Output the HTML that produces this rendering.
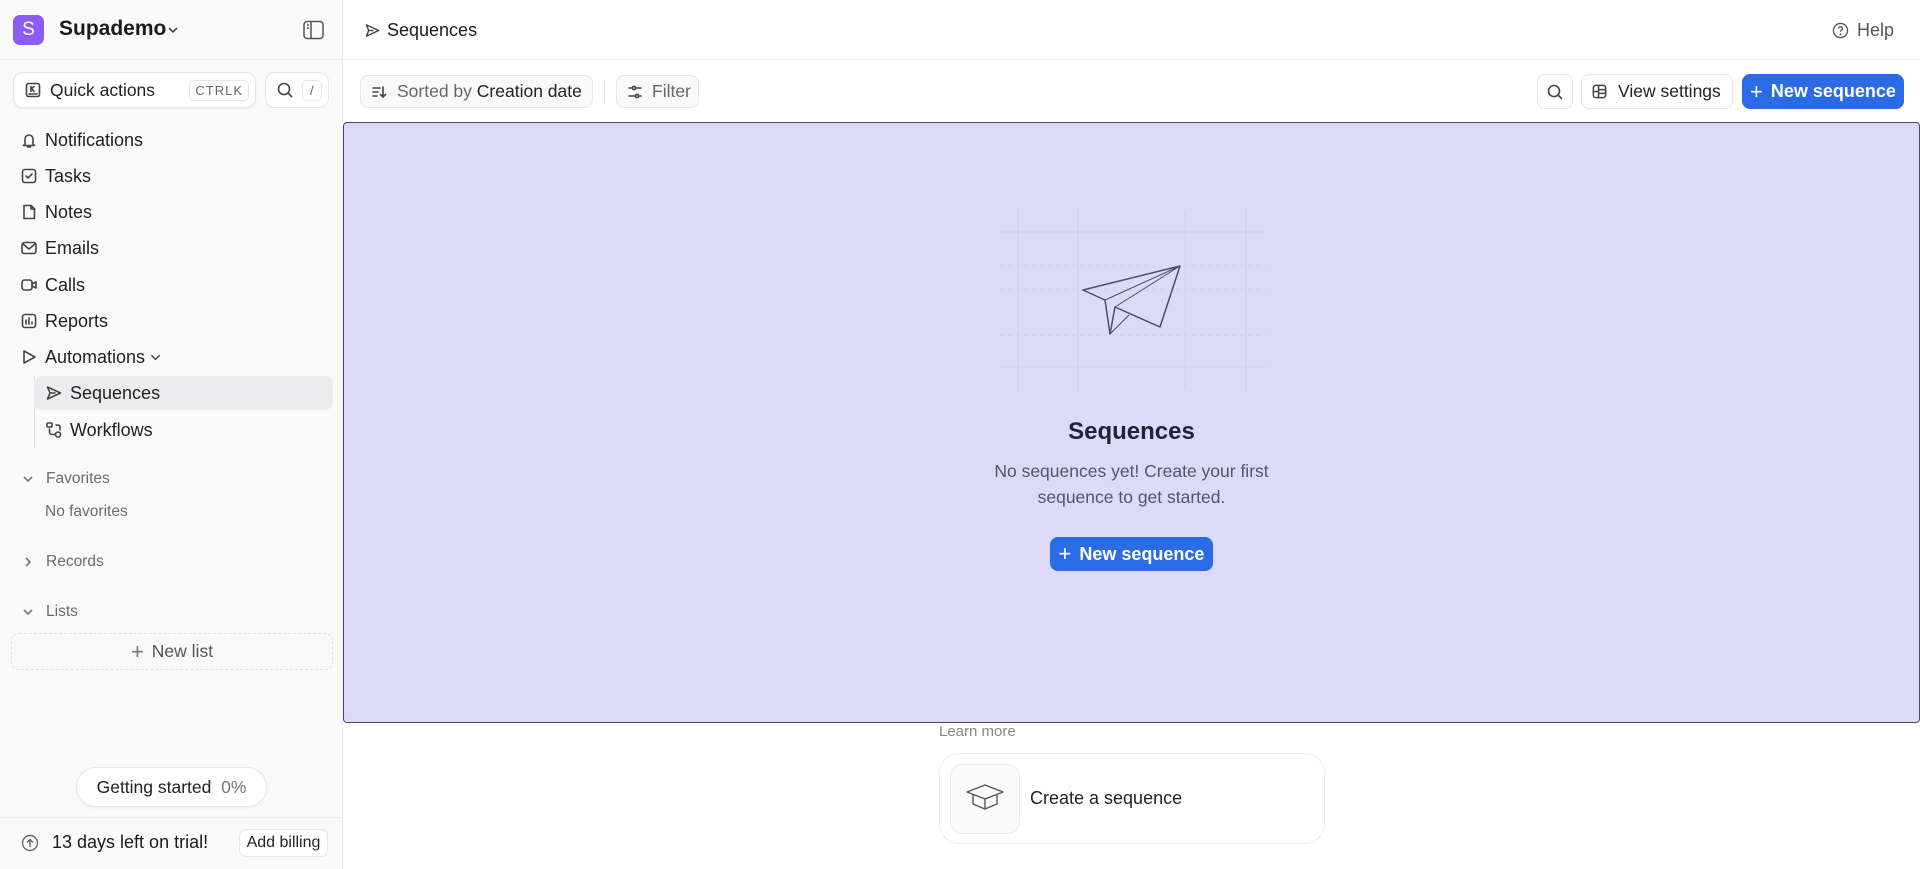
<!DOCTYPE html>
<html><head><meta charset="utf-8"><style>
*{box-sizing:border-box;margin:0;padding:0}
body{width:1920px;height:869px;overflow:hidden;font-family:"Liberation Sans",sans-serif;background:#fff;color:#1f1f24;position:relative}
.abs{position:absolute}
#side{position:absolute;left:0;top:0;width:343px;height:869px;background:#fafafa;border-right:1px solid #ececee}
.item{position:absolute;left:20px;font-size:18px;color:#222;display:flex;align-items:center;gap:7px;height:24px}
.item svg{width:18px;height:18px;stroke:#444;fill:none;stroke-width:1.6;stroke-linecap:round;stroke-linejoin:round}
.sec{position:absolute;left:22px;font-size:15.5px;color:#6b6b73;display:flex;align-items:center;gap:12px}
.sec svg{width:12px;height:12px;stroke:#777;fill:none;stroke-width:1.6}
.btn{position:absolute;border:1px solid #e6e6ea;border-radius:8px;background:#fff;display:flex;align-items:center;font-size:17.5px;color:#222}
.btn svg{stroke:#444;fill:none;stroke-width:1.6;stroke-linecap:round;stroke-linejoin:round}
</style></head><body>
<div id="side">
  <div class="abs" style="left:13px;top:15px;width:31px;height:30px;border-radius:7px;background:#8b5cf6;color:#fff;font-size:19px;display:flex;align-items:center;justify-content:center">S</div>
  <div class="abs" style="left:59px;top:17px;font-size:21px;font-weight:bold;color:#1a1a1f">Supademo</div>
  <svg class="abs" style="left:167px;top:24px" width="12" height="12" viewBox="0 0 12 12" fill="none" stroke="#333" stroke-width="1.5"><path d="M2 4l4 4 4-4"/></svg>
  <svg class="abs" style="left:303px;top:20px" width="21" height="20" viewBox="0 0 21 20" fill="none" stroke="#555" stroke-width="1.5"><rect x="1" y="1.5" width="19" height="17" rx="3"/><path d="M8 2v16M4 5h2M4 8h2"/></svg>
  <div class="abs" style="left:0;top:59px;width:343px;border-top:1px solid #eee"></div>
  <div class="btn" style="left:13px;top:72px;width:243px;height:36px;border-radius:10px;box-shadow:0 1px 2px rgba(0,0,0,.05)">
    <svg style="margin-left:11px" width="16" height="16" viewBox="0 0 16 16"><rect x="1.5" y="1.5" width="13" height="13" rx="2"/><path d="M6 4.5v5M6 7l3-2.5M6.8 6.5L9 9.5M4 12h8"/></svg>
    <span style="margin-left:9px">Quick actions</span>
    <span style="margin-left:auto;margin-right:6px;border:1px solid #e6e6ea;border-radius:5px;font-size:13px;color:#666;padding:2px 5px;letter-spacing:1px">CTRLK</span>
  </div>
  <div class="btn" style="left:265px;top:72px;width:64px;height:36px;border-radius:10px">
    <svg style="margin-left:10px" width="18" height="18" viewBox="0 0 18 18"><circle cx="8" cy="8" r="5.5"/><path d="M12 12l3.5 3.5"/></svg>
    <span style="margin-left:8px;border:1px solid #e6e6ea;border-radius:5px;font-size:13px;color:#666;padding:2px 7px">/</span>
  </div>
  <div class="item" style="top:128px"><svg viewBox="0 0 18 18"><path d="M5 13V8a4 4 0 018 0v5l1.5 1.5h-11zM7.5 16h3"/></svg>Notifications</div>
  <div class="item" style="top:164px"><svg viewBox="0 0 18 18"><rect x="2.5" y="2.5" width="13" height="13" rx="2.5"/><path d="M6 9l2 2 4-4"/></svg>Tasks</div>
  <div class="item" style="top:200px"><svg viewBox="0 0 18 18"><path d="M4 2.5h7l3.5 3.5v9.5H4z"/><path d="M11 2.5V6h3.5"/></svg>Notes</div>
  <div class="item" style="top:236px"><svg viewBox="0 0 18 18"><rect x="2" y="3.5" width="14" height="11" rx="2.5"/><path d="M3 5l6 5 6-5"/></svg>Emails</div>
  <div class="item" style="top:273px"><svg viewBox="0 0 18 18"><rect x="2" y="4" width="10" height="10" rx="2.5"/><path d="M12 8l4-2v6l-4-2"/></svg>Calls</div>
  <div class="item" style="top:309px"><svg viewBox="0 0 18 18"><rect x="2.5" y="2.5" width="13" height="13" rx="2.5"/><path d="M6 12V8M9 12V6M12 12v-2"/></svg>Reports</div>
  <div class="item" style="top:345px"><svg viewBox="0 0 18 18"><path d="M4 3l11 6-11 6z"/></svg>Automations<svg style="width:11px;height:11px;margin-left:-2px" viewBox="0 0 12 12"><path d="M2 4l4 4 4-4"/></svg></div>
  <div class="abs" style="left:34px;top:376px;width:1px;height:72px;background:#e2e2e6"></div>
  <div class="abs" style="left:34px;top:376px;width:299px;height:34px;border-radius:8px;background:#ececef"></div>
  <div class="item" style="left:45px;top:381px"><svg viewBox="0 0 18 18"><path d="M2.5 3l13 6-13 6 2.5-6z"/><path d="M5 9h5"/></svg>Sequences</div>
  <div class="item" style="left:45px;top:418px"><svg viewBox="0 0 18 18"><rect x="2" y="2" width="5" height="4" rx="1"/><circle cx="13" cy="13.5" r="2.5"/><path d="M4.5 8v3a2.5 2.5 0 002.5 2.5h3M11 4h2a2 2 0 012 2v3"/></svg>Workflows</div>
  <div class="sec" style="top:470px"><svg viewBox="0 0 12 12"><path d="M2 4l4 4 4-4"/></svg>Favorites</div>
  <div class="abs" style="left:45px;top:503px;font-size:15.5px;color:#6b6b73">No favorites</div>
  <div class="sec" style="top:553px"><svg viewBox="0 0 12 12"><path d="M4 2l4 4-4 4"/></svg>Records</div>
  <div class="sec" style="top:603px"><svg viewBox="0 0 12 12"><path d="M2 4l4 4 4-4"/></svg>Lists</div>
  <div class="abs" style="left:11px;top:633px;width:322px;height:37px;border:1px dashed #e2e2e6;border-radius:8px;display:flex;align-items:center;justify-content:center;font-size:17.5px;color:#555;gap:8px"><span style="font-size:22px;font-weight:300;color:#777">+</span>New list</div>
  <div class="abs" style="left:76px;top:767px;width:191px;height:40px;border:1px solid #e8e8ec;border-radius:20px;background:#fff;display:flex;align-items:center;justify-content:center;font-size:17.5px;color:#222;box-shadow:0 1px 3px rgba(0,0,0,.05)">Getting started&nbsp;&nbsp;<span style="color:#777">0%</span></div>
  <div class="abs" style="left:0;top:817px;width:343px;border-top:1px solid #eee"></div>
  <svg class="abs" style="left:20px;top:833px" width="20" height="20" viewBox="0 0 20 20" fill="none" stroke="#666" stroke-width="1.4"><circle cx="10" cy="10" r="7.5"/><path d="M10 14V6.5M7 9.5l3-3 3 3"/></svg>
  <div class="abs" style="left:52px;top:832px;font-size:18px;color:#1a1a1f">13 days left on trial!</div>
  <div class="btn" style="left:239px;top:829px;width:89px;height:28px;font-size:16px;justify-content:center;border-radius:7px">Add billing</div>
</div>

<svg class="abs" style="left:364px;top:22px" width="17" height="17" viewBox="0 0 18 18" fill="none" stroke="#444" stroke-width="1.5" stroke-linejoin="round"><path d="M2.5 3l13 6-13 6 2.5-6z"/><path d="M5 9h5"/></svg>
<div class="abs" style="left:387px;top:20px;font-size:18px;color:#1a1a1f">Sequences</div>
<svg class="abs" style="left:1832px;top:22px" width="17" height="17" viewBox="0 0 18 18" fill="none" stroke="#555" stroke-width="1.4"><circle cx="9" cy="9" r="7.5"/><path d="M7 7a2 2 0 113 1.7c-.7.4-1 .8-1 1.6"/><circle cx="9" cy="13" r=".4" fill="#555"/></svg>
<div class="abs" style="left:1857px;top:20px;font-size:18px;color:#555">Help</div>
<div class="abs" style="left:343px;top:59px;width:1577px;border-top:1px solid #eee"></div>

<div class="btn" style="left:360px;top:75px;width:233px;height:33px;background:#fafafa">
  <svg style="margin-left:10px" width="16" height="16" viewBox="0 0 16 16"><path d="M2 4h7M2 8h5M2 12h4M12 3v10M9.5 10.5L12 13l2.5-2.5"/></svg>
  <span style="margin-left:10px;color:#666">Sorted by&nbsp;</span><span>Creation date</span>
</div>
<div class="abs" style="left:604px;top:80px;width:1px;height:22px;background:#e8e8ec"></div>
<div class="btn" style="left:616px;top:75px;width:83px;height:33px;background:#fafafa">
  <svg style="margin-left:10px" width="16" height="16" viewBox="0 0 16 16"><path d="M2 4h3M9 4h5M2 12h6M12 12h2"/><circle cx="7" cy="4" r="1.6"/><circle cx="10" cy="12" r="1.6"/></svg>
  <span style="margin-left:9px;color:#666">Filter</span>
</div>
<div class="btn" style="left:1537px;top:74px;width:36px;height:35px;justify-content:center">
  <svg width="18" height="18" viewBox="0 0 18 18"><circle cx="8" cy="8" r="5.5"/><path d="M12 12l3.5 3.5"/></svg>
</div>
<div class="btn" style="left:1581px;top:74px;width:152px;height:35px">
  <svg style="margin-left:9px" width="17" height="17" viewBox="0 0 18 18"><rect x="2.5" y="2.5" width="13" height="13" rx="2.5"/><path d="M8 2.5v13M8 7h7.5M8 11h7.5M2.5 9H8"/></svg>
  <span style="margin-left:10px">View settings</span>
</div>
<div class="abs" style="left:1742px;top:74px;width:162px;height:35px;border-radius:8px;background:#2b6be6;color:#fff;font-size:18px;font-weight:bold;display:flex;align-items:center;justify-content:center;gap:8px"><span style="font-weight:300;font-size:22px">+</span>New sequence</div>

<div class="abs" style="left:343px;top:122px;width:1577px;height:601px;background:#dcdaf8;border:1.5px solid #4b4a66;border-radius:4px"></div>
<svg class="abs" style="left:990px;top:200px" width="290" height="200" viewBox="990 200 290 200" fill="none">
  <g stroke="#cfcdf0" stroke-width="1">
    <path d="M1018 210v180M1078 210v180M1185 210v180M1246 210v180"/>
    <path d="M1000 232h265M1000 367h265"/>
    <path d="M1000 266h265M1000 290h265M1000 335h265" stroke-dasharray="4 4"/>
  </g>
  <g stroke="#4e4d68" stroke-width="1.5" stroke-linejoin="round">
    <path d="M1083 290L1180 266L1160 327L1115 307L1110 334L1105 300Z"/>
    <path d="M1105 300L1180 266M1115 307L1180 266M1110 334L1129 315" stroke-width="1"/>
  </g>
</svg>
<div class="abs" style="left:343px;top:418px;width:1577px;text-align:center;font-size:24px;font-weight:bold;color:#23223a">Sequences</div>
<div class="abs" style="left:343px;top:458px;width:1577px;text-align:center;font-size:17.5px;line-height:26px;color:#55546c">No sequences yet! Create your first<br>sequence to get started.</div>
<div class="abs" style="left:1050px;top:537px;width:163px;height:34px;border-radius:8px;background:#2b6be6;color:#fff;font-size:18px;font-weight:bold;display:flex;align-items:center;justify-content:center;gap:8px"><span style="font-weight:300;font-size:22px">+</span>New sequence</div>

<div class="abs" style="left:939px;top:723px;font-size:15px;color:#888">Learn more</div>
<div class="abs" style="left:939px;top:753px;width:386px;height:91px;border:1px solid #ececef;border-radius:20px;background:#fff"></div>
<div class="abs" style="left:950px;top:764px;width:70px;height:70px;border:1px solid #ececef;border-radius:12px;background:#fafafa"></div>
<svg class="abs" style="left:964px;top:780px" width="42" height="36" viewBox="0 0 42 36" fill="none" stroke="#555" stroke-width="1.4" stroke-linejoin="round"><path d="M3 12L21 5l18 7-18 7z"/><path d="M9 15v9l12 5 12-5v-9"/><path d="M21 19v10"/></svg>
<div class="abs" style="left:1030px;top:788px;font-size:18px;color:#222">Create a sequence</div>
</body></html>
